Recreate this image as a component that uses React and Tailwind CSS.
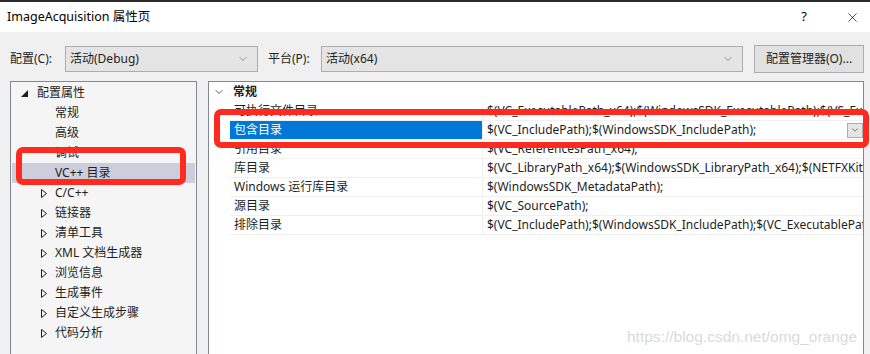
import { ChevronDown, X } from "lucide-react";

const font = "font-['Noto_Sans','Noto_Sans_CJK_SC',sans-serif]";

const treeItems = [
  { label: "常规" },
  { label: "高级" },
  { label: "调试" },
  { label: "VC++ 目录", selected: true },
  { label: "C/C++", arrow: true },
  { label: "链接器", arrow: true },
  { label: "清单工具", arrow: true },
  { label: "XML 文档生成器", arrow: true },
  { label: "浏览信息", arrow: true },
  { label: "生成事件", arrow: true },
  { label: "自定义生成步骤", arrow: true },
  { label: "代码分析", arrow: true },
];

const rows = [
  ["可执行文件目录", "$(VC_ExecutablePath_x64);$(WindowsSDK_ExecutablePath);$(VS_ExecutablePath);$(MSBuild_ExecutablePath)"],
  ["包含目录", "$(VC_IncludePath);$(WindowsSDK_IncludePath);", true],
  ["引用目录", "$(VC_ReferencesPath_x64);"],
  ["库目录", "$(VC_LibraryPath_x64);$(WindowsSDK_LibraryPath_x64);$(NETFXKitsDir)Lib\\um\\x64"],
  ["Windows 运行库目录", "$(WindowsSDK_MetadataPath);"],
  ["源目录", "$(VC_SourcePath);"],
  ["排除目录", "$(VC_IncludePath);$(WindowsSDK_IncludePath);$(VC_ExecutablePath_x64);$(VC_LibraryPath_x64)"],
];

function Combo({ width, text }) {
  return (
    <div className={`${width} h-[26px] bg-[#e5e5e5] border border-[#adadad] flex items-center pl-[4px] pr-[8px]`}>
      <span className="flex-1">{text}</span>
      <ChevronDown size={12} strokeWidth={1.2} className="text-[#555]" />
    </div>
  );
}

export default function App() {
  return (
    <div className={`w-[870px] h-[354px] overflow-hidden relative bg-[#f0f0f0] text-[12px] text-[#1e1e1e] ${font}`}>
      {/* 窗口顶边 */}
      <div className="h-[2px] bg-[#2b2b2b]" />

      {/* 标题栏 */}
      <div className="h-[30px] bg-white flex items-center pl-[7px] pr-[10px]">
        <span className="flex-1 text-[12.5px] text-black">ImageAcquisition 属性页</span>
        <span className="text-[13px] mr-[38px] text-black">?</span>
        <X size={15} strokeWidth={1.1} className="text-black" />
      </div>

      {/* 工具栏 */}
      <div className="h-[49px] flex items-start pt-[14px] pl-[10px]">
        <div className="h-[26px] flex items-center w-[55px]">配置(C):</div>
        <Combo width="w-[193px]" text="活动(Debug)" />
        <div className="h-[26px] flex items-center ml-[10px] w-[53px]">平台(P):</div>
        <Combo width="w-[422px]" text="活动(x64)" />
        <div className="ml-[11px] -mt-[1px] w-[110px] h-[28px] bg-[#e1e1e1] border border-[#adadad] flex items-center justify-center">
          配置管理器(O)...
        </div>
      </div>

      {/* 主体 */}
      <div className="flex pl-[10px] gap-[11px] h-[300px]">
        {/* 左侧树 */}
        <div className="w-[187px] h-full border border-[#828790] bg-[#f5f5f5] px-[1px] pt-[1px]">
          <div className="h-[20px] flex items-center">
            <svg width="7" height="7" viewBox="0 0 7 7" className="ml-[9px] mr-[9px]">
              <path d="M7 0 L7 7 L0 7 Z" fill="#1e1e1e" />
            </svg>
            <span>配置属性</span>
          </div>
          {treeItems.map((it) => (
            <div
              key={it.label}
              className={`h-[20px] flex items-center ${it.selected ? "bg-[#cccedb]" : ""}`}
            >
              <span className="w-[43px] flex justify-end pr-[8px]">
                {it.arrow && (
                  <svg width="6" height="9" viewBox="0 0 6 9">
                    <path d="M0.5 0.5 L5.5 4.5 L0.5 8.5 Z" fill="none" stroke="#1e1e1e" strokeWidth="1" />
                  </svg>
                )}
              </span>
              <span>{it.label}</span>
            </div>
          ))}
        </div>

        {/* 右侧属性网格 */}
        <div className="w-[656px] h-full border border-[#828790] bg-white">
          <div className="h-[20px] flex items-center">
            <ChevronDown size={12} strokeWidth={1.6} className="ml-[4px] mr-[8px] text-[#333]" />
            <span className="font-bold">常规</span>
          </div>
          <div className="pl-[21px]">
            {rows.map(([name, value, sel]) => (
              <div key={name} className="h-[19px] flex border-b border-[#f0f0f0]">
                <div
                  className={`w-[253px] shrink-0 flex items-center pl-[4px] border-r border-[#f0f0f0] ${
                    sel ? "bg-[#0078d7] text-white" : ""
                  }`}
                >
                  {name}
                </div>
                <div className="flex-1 min-w-0 flex items-center pl-[4px] overflow-hidden">
                  <span className="flex-1 whitespace-nowrap overflow-hidden">{value}</span>
                  {sel && (
                    <span className="w-[16px] h-[15px] shrink-0 bg-[#e5e5e5] border border-[#adadad] flex items-center justify-center">
                      <ChevronDown size={10} strokeWidth={1.5} className="text-[#333]" />
                    </span>
                  )}
                </div>
              </div>
            ))}
          </div>
        </div>
      </div>

      {/* 标注红框 */}
      <div className="absolute left-[214px] top-[109px] w-[655px] h-[39px] border-[6px] border-[#ff2a1f] rounded-[7px]" />
      <div className="absolute left-[16px] top-[147px] w-[170px] h-[38px] border-[6px] border-[#ff2a1f] rounded-[7px]" />

      {/* 水印 */}
      <div className="absolute left-[627px] top-[325px] text-[15.5px] text-[#dadada] font-['Liberation_Sans',sans-serif]">
        https://blog.csdn.net/omg_orange
      </div>
    </div>
  );
}
